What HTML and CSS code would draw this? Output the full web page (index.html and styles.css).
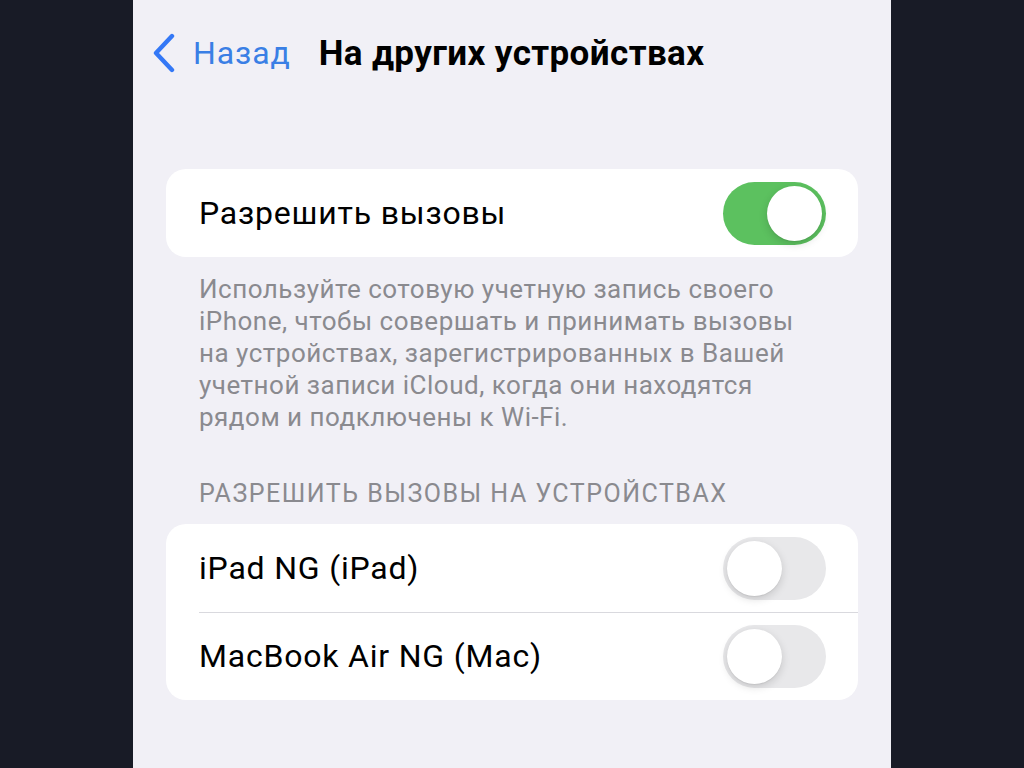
FILE: index.html
```html
<!DOCTYPE html>
<html lang="ru">
<head>
<meta charset="utf-8">
<title>На других устройствах</title>
<link rel="stylesheet" href="styles.css">
</head>
<body>
<div class="frame">
  <main class="screen">
    <header class="navbar">
      <a class="back" href="#">
        <svg class="chevron" width="24" height="40" viewBox="0 0 24 40" aria-hidden="true">
          <path d="M20 3 L4 20 L20 37" fill="none" stroke="#3478f6" stroke-width="4.4" stroke-linecap="round" stroke-linejoin="round"/>
        </svg>
        <span>Назад</span>
      </a>
      <h1 class="title">На других устройствах</h1>
    </header>

    <section class="group first">
      <div class="card">
        <div class="row">
          <span class="label">Разрешить вызовы</span>
          <span class="switch on"><span class="knob"></span></span>
        </div>
      </div>
      <p class="footer">Используйте сотовую учетную запись своего iPhone, чтобы совершать и принимать вызовы на устройствах, зарегистрированных в Вашей учетной записи iCloud, когда они находятся рядом и подключены к Wi‑Fi.</p>
    </section>

    <section class="group">
      <h2 class="group-header">РАЗРЕШИТЬ ВЫЗОВЫ НА УСТРОЙСТВАХ</h2>
      <div class="card">
        <div class="row">
          <span class="label">iPad NG (iPad)</span>
          <span class="switch"><span class="knob"></span></span>
        </div>
        <div class="row">
          <span class="label">MacBook Air NG (Mac)</span>
          <span class="switch"><span class="knob"></span></span>
        </div>
      </div>
    </section>
  </main>
</div>
</body>
</html>
```

FILE: styles.css
```css
* {
  box-sizing: border-box;
}

html, body {
  margin: 0;
  height: 100%;
}

body {
  background: #181b26;
  font-family: Roboto, "Noto Sans", "Liberation Sans", sans-serif;
  color: #000;
}

.frame {
  display: flex;
  padding-left: 133px;
  height: 768px;
}

.screen {
  width: 758px;
  height: 768px;
  background: #f1f0f6;
  padding: 0 33px;
  overflow: hidden;
}

/* navigation bar */
.navbar {
  display: flex;
  align-items: center;
  height: 106px;
  margin: 0 -33px;
  padding-left: 19px;
  gap: 28px;
}

.back {
  display: flex;
  align-items: center;
  gap: 17px;
  color: #3a7fe5;
  text-decoration: none;
  font-size: 32px;
  letter-spacing: 0.9px;
}

.chevron {
  display: block;
  flex: none;
}

.title {
  margin: 0;
  font-size: 35px;
  font-weight: 700;
  letter-spacing: 0.4px;
}

/* grouped list */
.group.first {
  margin-top: 63px;
}

.card {
  background: #fff;
  border-radius: 20px;
  overflow: hidden;
}

.row {
  display: flex;
  align-items: center;
  justify-content: space-between;
  height: 88px;
  padding: 0 32px 0 33px;
  position: relative;
}

.row + .row::before {
  content: "";
  position: absolute;
  left: 33px;
  right: 0;
  top: 0;
  height: 1px;
  background: #d9d9de;
}

.label {
  font-size: 32px;
  letter-spacing: 0.8px;
}

.footer {
  margin: 16px 0 0;
  padding: 0 55px 0 33px;
  font-size: 26px;
  line-height: 32px;
  color: #8a8a8f;
  letter-spacing: 0.5px;
}

.group-header {
  margin: 45px 0 0;
  padding: 0 33px;
  height: 46px;
  font-size: 25px;
  font-weight: 400;
  color: #8a8a8f;
  letter-spacing: 1.5px;
  line-height: 32px;
}

/* switches */
.switch {
  position: relative;
  flex: none;
  width: 103px;
  height: 63px;
  border-radius: 32px;
  background: #e8e8ea;
}

.switch .knob {
  position: absolute;
  top: 4px;
  left: 4px;
  width: 55px;
  height: 55px;
  border-radius: 50%;
  background: #fff;
  box-shadow: 0 3px 8px rgba(0, 0, 0, 0.15), 0 1px 1px rgba(0, 0, 0, 0.06);
}

.switch.on {
  background: #5cc15f;
}

.switch.on .knob {
  left: 44px;
}
```
